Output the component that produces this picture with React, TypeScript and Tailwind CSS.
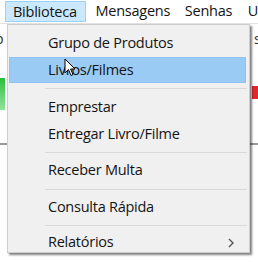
import React from "react";

const font = { fontFamily: '"Open Sans", "Noto Sans", sans-serif' };

function Item({ label, active, h = 27, chevron }: { label: string; active?: boolean; h?: number; chevron?: boolean }) {
  return (
    <div
      className={
        "ml-[1px] mr-[3px] flex items-center justify-between pl-[38px] pr-[11px] border " +
        (active ? "bg-[#99cbf5] border-[#8fc3f1]" : "border-transparent")
      }
      style={{ height: h }}
    >
      <span className="text-[14.5px] leading-none text-[#141414] tracking-[-0.25px]">{label}</span>
      {chevron && (
        <svg width="6" height="10" viewBox="0 0 6 10" className="text-[#555]">
          <path d="M1 1 L5 5 L1 9" fill="none" stroke="currentColor" strokeWidth="1.4" />
        </svg>
      )}
    </div>
  );
}

function Sep({ h, top }: { h: number; top: number }) {
  return (
    <div className="ml-[37px] mr-[2px] flex flex-col" style={{ height: h }}>
      <div style={{ height: top }} />
      <div className="h-px bg-[#d9d9d9]" />
    </div>
  );
}

export default function App() {
  return (
    <div className="relative w-[258px] h-[262px] overflow-hidden bg-white" style={font}>
      {/* menu bar */}
      <div className="h-[24px] flex items-start border-b border-[#e3e3e3] text-[14.5px] tracking-[-0.25px] text-[#141414]">
        <div className="ml-[5px] mt-[1px] w-[82px] h-[21px] flex items-center pl-[7px] bg-[#cce8ff] border border-[#99d1ff]">
          Biblioteca
        </div>
        <div className="w-[92px] h-[22px] flex items-center pl-[10px]">Mensagens</div>
        <div className="w-[64px] h-[22px] flex items-center pl-[9px]">Senhas</div>
        <div className="h-[22px] flex items-center pl-[9px]">U</div>
      </div>
      {/* background toolbar */}
      <div className="h-[30px] flex items-center justify-between text-[14.5px] text-[#333]">
        <span className="-ml-[9px]">ib</span>
        <span className="mr-[-3px]">s</span>
      </div>
      <div className="h-[89px] flex justify-between items-start pt-[24px]">
        <div className="w-[5px] h-[32px] bg-gradient-to-b from-[#1fbf3a] to-[#8fe39b]" />
        <div className="w-[6px] h-[13px] mt-[8px] bg-[#e0262e]" />
      </div>
      <div className="h-[2px] bg-[#9a9a9a]" />

      {/* dropdown */}
      <div className="absolute left-[7px] top-[24px] w-[243px] h-[229px] bg-[#f0f0f0] border border-[#cdcdcd] shadow-[2px_2px_2px_rgba(0,0,0,0.5)] pt-[5px]">
        <Item label="Grupo de Produtos" />
        <Item label="Livros/Filmes" active h={26} />
        <Sep h={11} top={5} />
        <Item label="Emprestar" />
        <Item label="Entregar Livro/Filme" />
        <Sep h={9} top={4} />
        <Item label="Receber Multa" />
        <Sep h={10} top={5} />
        <Item label="Consulta Rápida" />
        <Sep h={9} top={4} />
        <Item label="Relatórios" h={25} chevron />
      </div>
      {/* cursor */}
      <svg className="absolute left-[64px] top-[58px]" width="12" height="19" viewBox="0 0 12 19">
        <path d="M1 1 L1 15 L4.5 11.5 L7 17.5 L9 16.6 L6.6 11 L11 11 Z" fill="white" stroke="black" strokeWidth="1" strokeLinejoin="round" />
      </svg>
    </div>
  );
}
